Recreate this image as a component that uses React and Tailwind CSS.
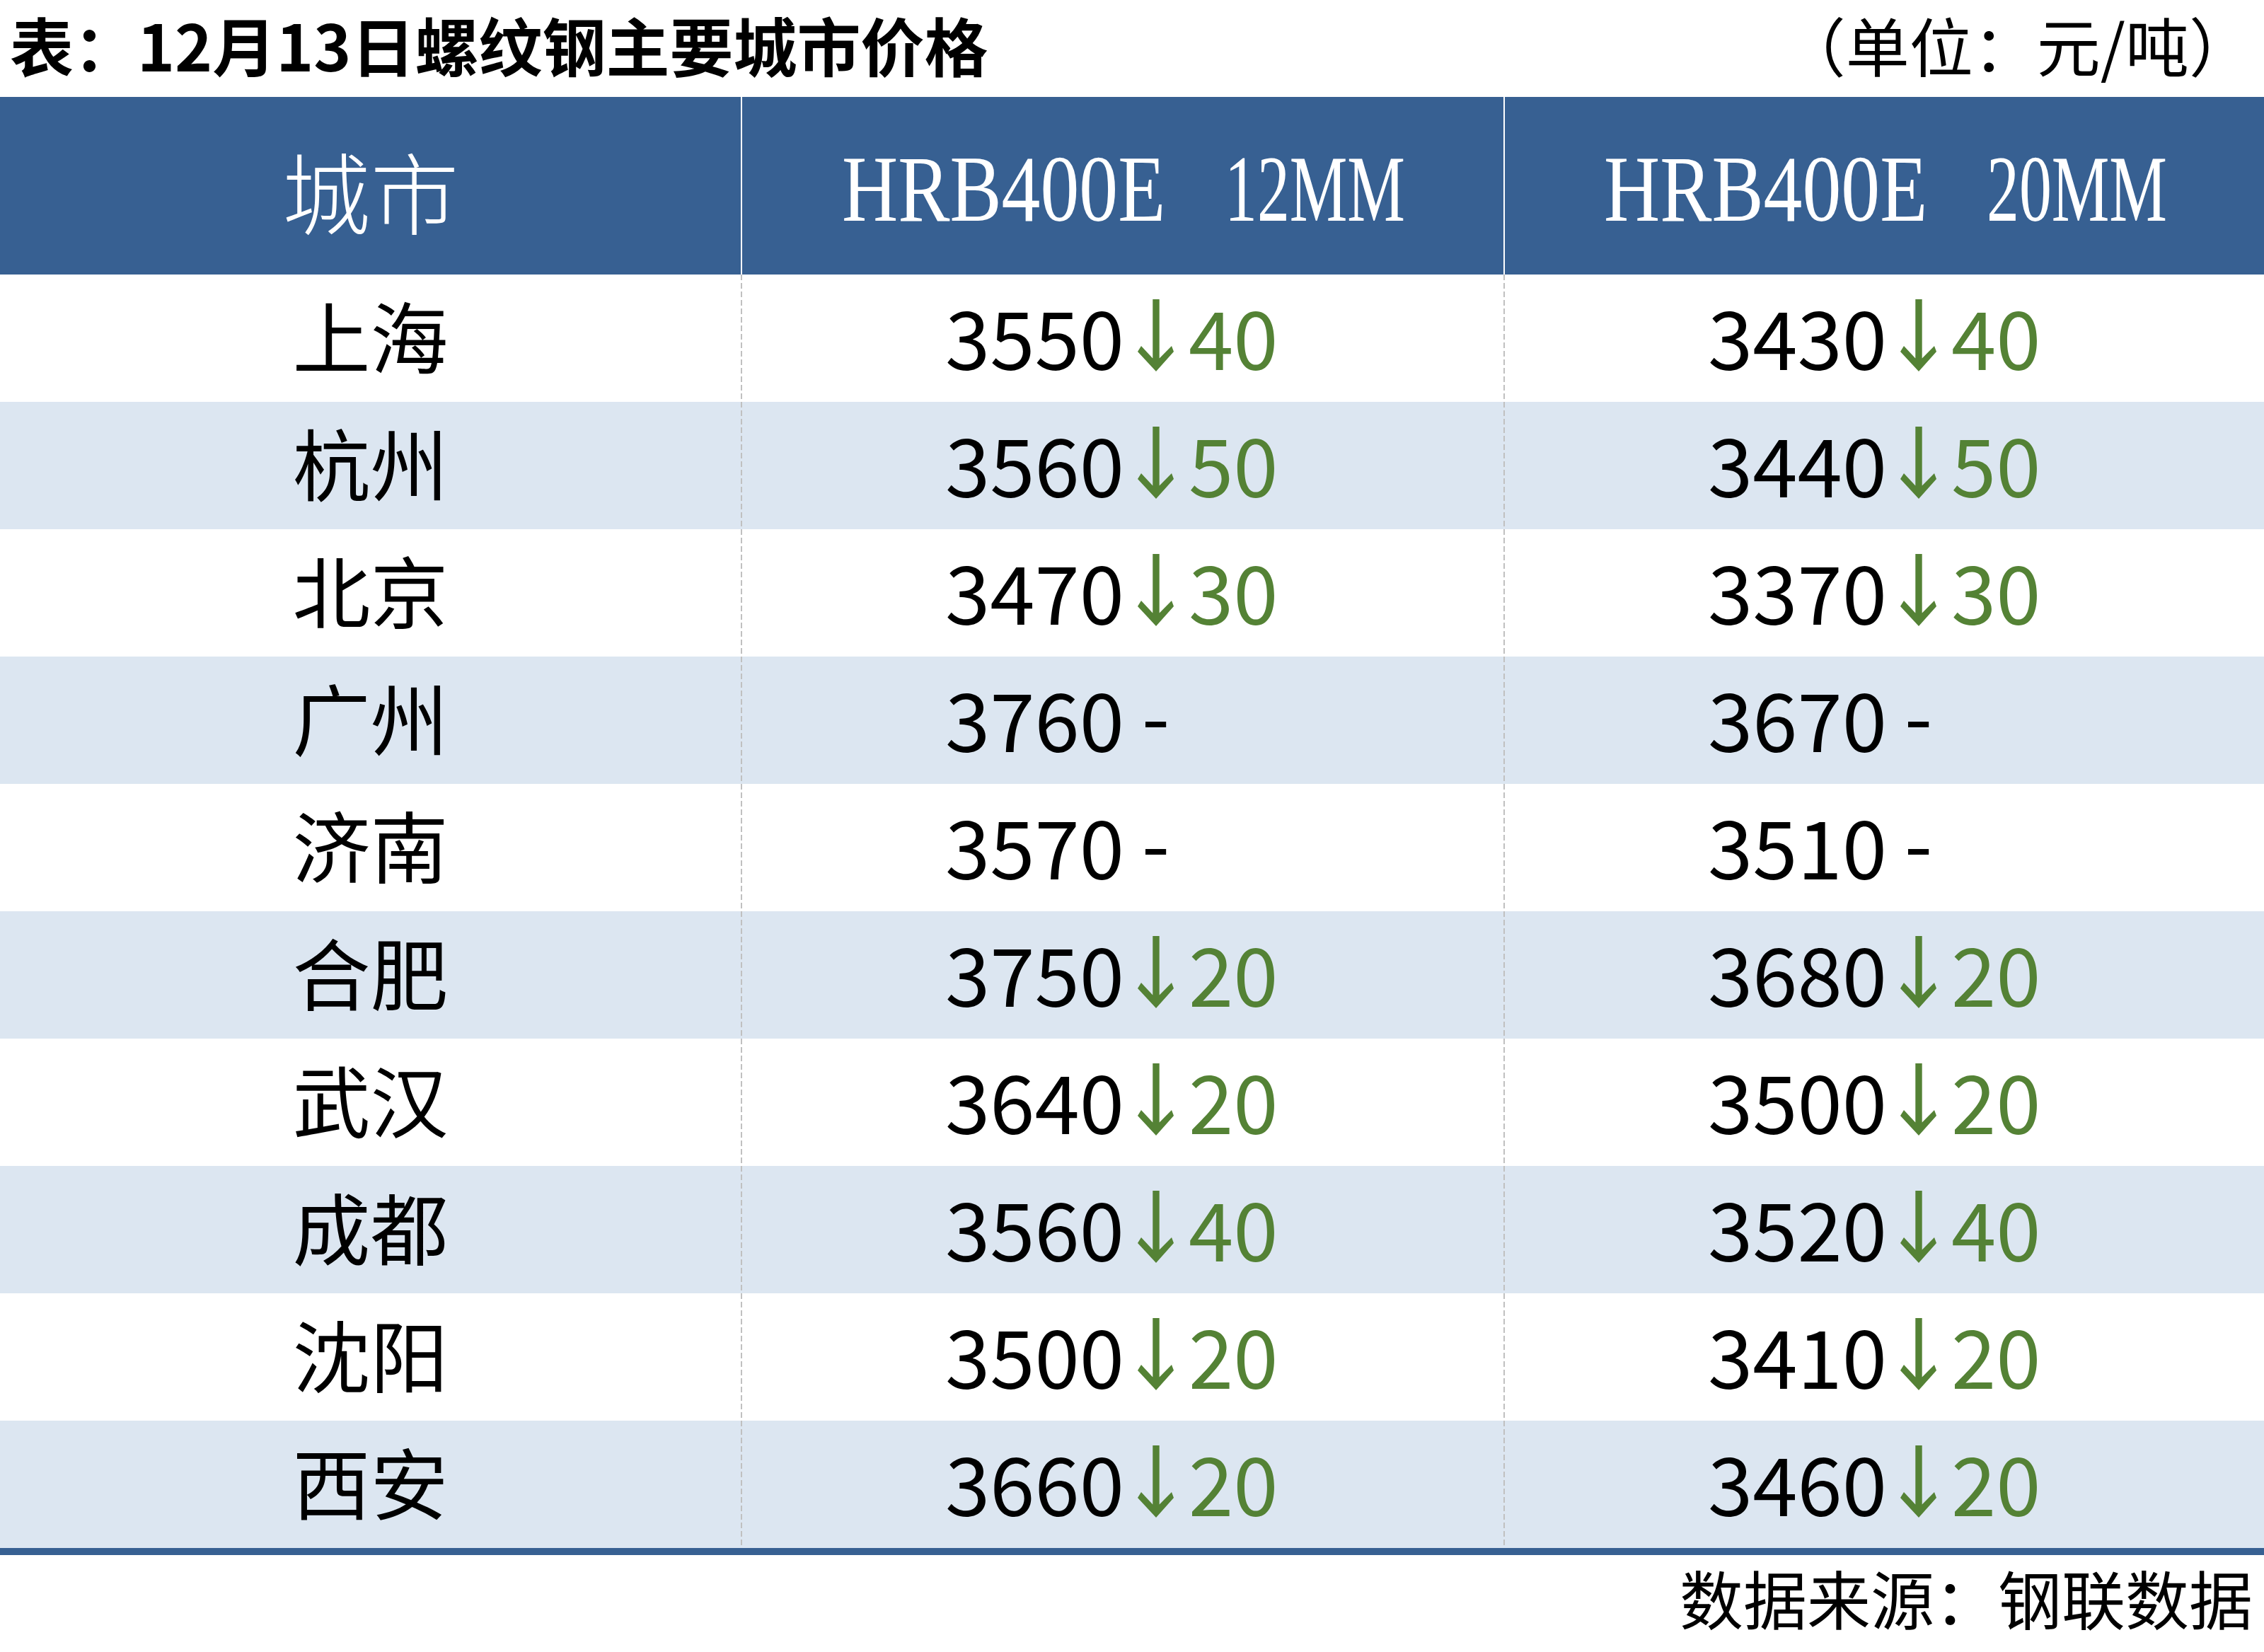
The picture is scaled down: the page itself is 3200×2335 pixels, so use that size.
import React from "react";

const rows = [
  ["上海", "3550", "40", "3430", "40"],
  ["杭州", "3560", "50", "3440", "50"],
  ["北京", "3470", "30", "3370", "30"],
  ["广州", "3760", null, "3670", null],
  ["济南", "3570", null, "3510", null],
  ["合肥", "3750", "20", "3680", "20"],
  ["武汉", "3640", "20", "3500", "20"],
  ["成都", "3560", "40", "3520", "40"],
  ["沈阳", "3500", "20", "3410", "20"],
  ["西安", "3660", "20", "3460", "20"],
];

function Arrow() {
  return (
    <svg width="57" height="110" viewBox="0 0 57 110" className="block">
      <path
        d="M8 69 L24.3 86.6 L24.3 3 L33.7 3 L33.7 86.6 L51 69 L54 77 L29 105 L3 77 Z"
        fill="#548235"
      />
    </svg>
  );
}

function Divider() {
  return (
    <div className="w-[2px] h-full bg-[repeating-linear-gradient(to_bottom,#c0c0c0_0px,#c0c0c0_8px,transparent_8px,transparent_12px)]" />
  );
}

function PriceCell({ price, change }) {
  return (
    <div className="grid grid-cols-[556px_57px_1fr] h-full">
      <div className="flex items-center justify-end pr-[16px] pb-[8px] text-[114px] leading-none text-black">{price}</div>
      <div className="flex items-start justify-center pt-[32px]">
        {change ? (
          <Arrow />
        ) : (
          <span className="text-[114px] leading-none text-black mt-[-10px]">-</span>
        )}
      </div>
      <div className="flex items-center pl-[18px] pb-[8px] text-[114px] leading-none text-[#548235]">{change}</div>
    </div>
  );
}

function Spec({ a, b }) {
  return (
    <div className="flex items-center pt-[10px] font-['Liberation_Serif',serif] text-[133px] leading-none">
      <div className="w-[457px] flex">
        <span className="inline-block origin-left scale-x-[0.825] whitespace-pre">{a}</span>
      </div>
      <div className="w-[84px]" />
      <div className="w-[253px] flex">
        <span className="inline-block origin-left scale-x-[0.69] whitespace-pre">{b}</span>
      </div>
    </div>
  );
}

export default function App() {
  return (
    <div className="w-[3200px] h-[2335px] bg-white font-['Noto_Sans_CJK_SC',sans-serif] text-black">
      <div className="h-[137px] flex items-center justify-between pl-[14px] pr-[16px] pb-[14px]">
        <div className="text-[90px] leading-none font-bold">表：12月13日螺纹钢主要城市价格</div>
        <div className="text-[90px] leading-none">（单位：元/吨）</div>
      </div>
      <div className="h-[251px] bg-[#376092] grid grid-cols-[1047px_2px_1076px_2px_1073px] text-white">
        <div className="flex items-center justify-center pt-[10px] text-[125px] leading-none font-light">城市</div>
        <div className="bg-white" />
        <div className="flex items-center justify-center">
          <Spec a="HRB400E" b="12MM" />
        </div>
        <div className="bg-white" />
        <div className="flex items-center justify-center">
          <Spec a="HRB400E" b="20MM" />
        </div>
      </div>
      {rows.map((r, i) => (
        <div
          key={r[0]}
          className={
            "h-[180px] grid grid-cols-[1047px_2px_1076px_2px_1073px] " +
            (i % 2 === 1 ? "bg-[#dce6f1]" : "bg-white")
          }
        >
          <div className="flex items-center justify-center pb-[12px] text-[110px] leading-none">{r[0]}</div>
          <Divider />
          <PriceCell price={r[1]} change={r[2]} />
          <Divider />
          <PriceCell price={r[3]} change={r[4]} />
        </div>
      ))}
      <div className="h-[10px] bg-[#376092]" />
      <div className="flex justify-end pr-[16px] pt-[14px]">
        <div className="text-[90px] leading-none">数据来源：钢联数据</div>
      </div>
    </div>
  );
}
